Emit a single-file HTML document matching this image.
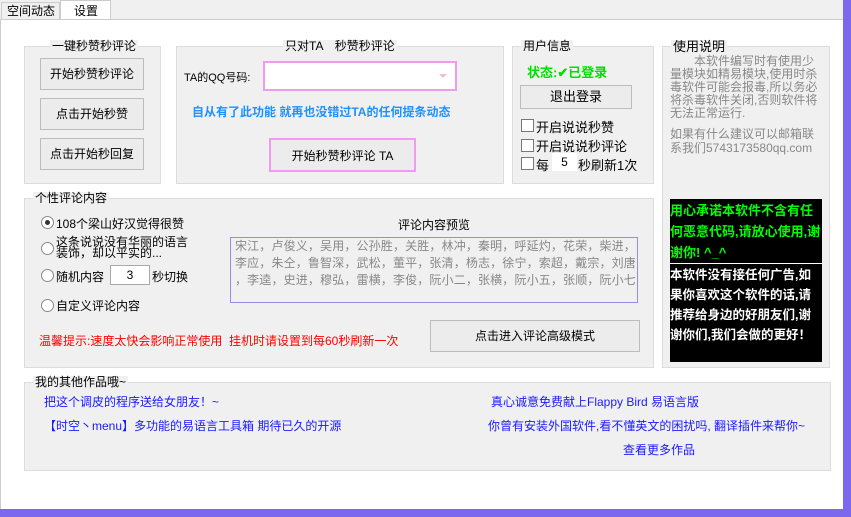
<!DOCTYPE html>
<html><head><meta charset="utf-8"><style>
*{margin:0;padding:0;box-sizing:border-box}
body{width:851px;height:517px;background:#f0f0f0;position:relative;overflow:hidden;font-family:"Liberation Sans","Noto Sans CJK SC","WenQuanYi Zen Hei",sans-serif;font-size:12px;color:#000}
.a{position:absolute;white-space:nowrap}
.g{position:absolute;border:1px solid #dcdcdc;background:#f0f0f0}
.t{position:absolute;top:-7px;background:#f0f0f0;padding:0 2px;font-size:12px;line-height:13px}
.btn{position:absolute;border:1px solid #bcbcbc;background:#ececec;text-align:center;font-size:12px}
.cb{position:absolute;width:13px;height:13px;border:1px solid #777;background:#fff}
.rb{position:absolute;width:13px;height:13px;border:1px solid #888;border-radius:50%;background:#fff}
.lk{color:#1a1aff;font-size:12px}
</style></head><body>
<div class="a" style="left:0;top:0;width:843px;height:20px;background:#f0f0f0"></div>
<div class="a" style="left:1px;top:2px;width:59px;height:18px;border:1px solid #ccc;border-bottom:none;background:#f0f0f0;font-size:12px;line-height:16px;padding-left:5px">空间动态</div>
<div class="a" style="left:60px;top:0;width:51px;height:21px;border:1px solid #ccc;border-bottom:none;background:#fff;font-size:12px;line-height:20px;padding-left:13px">设置</div>
<div class="a" style="left:0;top:19px;width:843px;height:490px;background:#fff;border-top:1px solid #ccc;border-left:1px solid #ccc"></div>
<div class="a" style="left:843px;top:0;width:8px;height:517px;background:#7b68ee"></div>
<div class="a" style="left:0;top:509px;width:851px;height:8px;background:#7b68ee"></div>

<div class="g" style="left:24px;top:46px;width:137px;height:138px"><div class="t" style="left:25px">一键秒赞秒评论</div></div>
<div class="btn" style="left:40px;top:58px;width:104px;height:32px;line-height:30px">开始秒赞秒评论</div>
<div class="btn" style="left:40px;top:98px;width:104px;height:32px;line-height:30px">点击开始秒赞</div>
<div class="btn" style="left:40px;top:138px;width:104px;height:32px;line-height:30px">点击开始秒回复</div>

<div class="g" style="left:176px;top:46px;width:328px;height:138px"><div class="t" style="left:106px">只对TA　秒赞秒评论</div></div>
<div class="a" style="left:184px;top:69px;font-size:11px">TA的QQ号码:</div>
<div class="a" style="left:263px;top:61px;width:194px;height:30px;border:2px solid #f09af0;background:#fff"><div class="a" style="right:8px;top:11px;width:0;height:0;border-left:4px solid transparent;border-right:4px solid transparent;border-top:4px solid #f0c0d0"></div></div>
<div class="a" style="left:192px;top:103px;color:#1e90ff;font-weight:bold;font-size:12px">自从有了此功能 就再也没错过TA的任何提条动态</div>
<div class="btn" style="left:269px;top:138px;width:147px;height:34px;line-height:32px;border:2px solid #f09af0">开始秒赞秒评论 TA</div>

<div class="g" style="left:512px;top:46px;width:142px;height:138px"><div class="t" style="left:8px">用户信息</div></div>
<div class="a" style="left:527px;top:62px;color:#00e000;font-weight:bold;font-size:13px">状态:✔已登录</div>
<div class="btn" style="left:520px;top:85px;width:112px;height:24px;line-height:22px;font-size:13px">退出登录</div>
<div class="cb" style="left:521px;top:119px"></div><div class="a" style="left:536px;top:117px;font-size:13px">开启说说秒赞</div>
<div class="cb" style="left:521px;top:139px"></div><div class="a" style="left:536px;top:136px;font-size:13px">开启说说秒评论</div>
<div class="cb" style="left:521px;top:157px"></div><div class="a" style="left:536px;top:155px;font-size:13px">每</div>
<div class="a" style="left:552px;top:153px;width:25px;height:18px;background:#fff;text-align:center;line-height:18px">5</div>
<div class="a" style="left:578px;top:155px;font-size:13px">秒刷新1次</div>

<div class="g" style="left:662px;top:46px;width:168px;height:322px"><div class="t" style="left:8px;font-size:13px">使用说明</div></div>
<div class="a" style="left:670px;top:55px;width:150px;white-space:normal;color:#888;font-size:12px;line-height:13px;text-indent:24px">本软件编写时有使用少量模块如精易模块,使用时杀毒软件可能会报毒,所以务必将杀毒软件关闭,否则软件将无法正常运行.</div>
<div class="a" style="left:670px;top:127px;width:152px;white-space:normal;color:#888;font-size:12px;line-height:14px">如果有什么建议可以邮箱联系我们5743173580qq.com</div>
<div class="a" style="left:670px;top:199px;width:152px;height:163px;background:#000"></div>
<div class="a" style="left:670px;top:200px;color:#00ff00;font-weight:bold;font-size:13px;line-height:21px">用心承诺本软件不含有任<br>何恶意代码,请放心使用,谢<br>谢你! ^_^</div>
<div class="a" style="left:670px;top:263px;width:152px;height:1px;background:#fff"></div>
<div class="a" style="left:670px;top:265px;color:#fff;font-weight:bold;font-size:12.5px;line-height:20px">本软件没有接任何广告,如<br>果你喜欢这个软件的话,请<br>推荐给身边的好朋友们,谢<br>谢你们,我们会做的更好！</div>

<div class="g" style="left:24px;top:198px;width:630px;height:170px"><div class="t" style="left:8px;font-size:12px">个性评论内容</div></div>
<div class="rb" style="left:41px;top:216px"><div class="a" style="left:3px;top:3px;width:5px;height:5px;border-radius:50%;background:#333"></div></div>
<div class="a" style="left:56px;top:215px">108个梁山好汉觉得很赞</div>
<div class="rb" style="left:41px;top:242px"></div>
<div class="a" style="left:56px;top:237px;line-height:11px">这条说说没有华丽的语言<br>装饰，却以平实的...</div>
<div class="rb" style="left:41px;top:269px"></div>
<div class="a" style="left:56px;top:268px">随机内容</div>
<div class="a" style="left:110px;top:265px;width:40px;height:20px;border:1px solid #aaa;background:#fff;text-align:center;line-height:18px">3</div>
<div class="a" style="left:152px;top:268px">秒切换</div>
<div class="rb" style="left:41px;top:299px"></div>
<div class="a" style="left:56px;top:297px">自定义评论内容</div>
<div class="a" style="left:398px;top:216px">评论内容预览</div>
<div class="a" style="left:230px;top:237px;width:408px;height:66px;border:1px solid #9a8ae8;background:#f0f0f0"></div>
<div class="a" style="left:235px;top:238px;color:#888;font-size:12px;line-height:17px;letter-spacing:0.15px">宋江，卢俊义，吴用，公孙胜，关胜，林冲，秦明，呼延灼，花荣，柴进，<br>李应，朱仝，鲁智深，武松，董平，张清，杨志，徐宁，索超，戴宗，刘唐<br>，李逵，史进，穆弘，雷横，李俊，阮小二，张横，阮小五，张顺，阮小七</div>
<div class="a" style="left:39px;top:332px;color:#ff0000">温馨提示:速度太快会影响正常使用&nbsp; 挂机时请设置到每60秒刷新一次</div>
<div class="btn" style="left:430px;top:320px;width:210px;height:32px;line-height:30px">点击进入评论高级模式</div>

<div class="g" style="left:24px;top:382px;width:807px;height:89px"><div class="t" style="left:8px">我的其他作品哦~</div></div>
<div class="a lk" style="left:44px;top:393px">把这个调皮的程序送给女朋友！~</div>
<div class="a lk" style="left:44px;top:417px">【时空丶menu】多功能的易语言工具箱 期待已久的开源</div>
<div class="a lk" style="left:491px;top:393px">真心诚意免费献上Flappy Bird 易语言版</div>
<div class="a lk" style="left:488px;top:417px">你曾有安装外国软件,看不懂英文的困扰吗, 翻译插件来帮你~</div>
<div class="a lk" style="left:623px;top:441px">查看更多作品</div>
</body></html>
